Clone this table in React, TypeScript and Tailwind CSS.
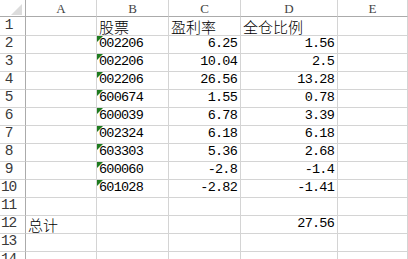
import React from 'react'

// Excel-like sheet: row header + columns A..E
const cols = ['A', 'B', 'C', 'D', 'E']

type Row = { a?: string; b?: string; c?: string; d?: string; flag?: boolean }

const rows: Row[] = [
  { b: '股票', c: '盈利率', d: '全仓比例' },
  { b: '002206', c: '6.25', d: '1.56', flag: true },
  { b: '002206', c: '10.04', d: '2.5', flag: true },
  { b: '002206', c: '26.56', d: '13.28', flag: true },
  { b: '600674', c: '1.55', d: '0.78', flag: true },
  { b: '600039', c: '6.78', d: '3.39', flag: true },
  { b: '002324', c: '6.18', d: '6.18', flag: true },
  { b: '603303', c: '5.36', d: '2.68', flag: true },
  { b: '600060', c: '-2.8', d: '-1.4', flag: true },
  { b: '601028', c: '-2.82', d: '-1.41', flag: true },
  {},
  { a: '总计', d: '27.56' },
  {},
  {},
]

const mono = "font-['Liberation_Mono',monospace] text-[13.5px] leading-[13px] tracking-[-0.77px]"
const cjk = "font-['Noto_Sans_CJK_SC',sans-serif] font-light text-[15px] leading-[15px]"

function isCjk(s: string) {
  return /[\u4e00-\u9fff]/.test(s)
}

function Cell({ text, flag, align }: { text?: string; flag?: boolean; align: 'left' | 'right' }) {
  const chinese = text ? isCjk(text) : false
  return (
    <div
      className={`relative flex items-end border-r border-b border-[#d4d4d4] ${
        align === 'right' ? 'justify-end pr-[3px]' : 'justify-start pl-[2px]'
      } ${chinese ? 'pb-[1px]' : 'pb-[3px]'}`}
    >
      {flag && (
        <span className="absolute left-0 top-0 w-0 h-0 border-t-[6px] border-r-[6px] border-t-[#1e7b1e] border-r-transparent" />
      )}
      {text && <span className={`text-black whitespace-nowrap ${chinese ? cjk : mono}`}>{text}</span>}
    </div>
  )
}

export default function App() {
  return (
    <div className="w-[408px] h-[259px] overflow-hidden bg-white">
      <div className="grid grid-cols-[26px_71px_72px_72px_97px_1fr] grid-rows-[17px_19px_repeat(13,18px)]">
        {/* corner */}
        <div className="flex items-end justify-end pr-[3px] pb-[1px] border-r border-b border-r-[#ababab] border-b-[#ababab]">
          <svg width="11" height="11" viewBox="0 0 11 11">
            <polygon points="11,0 11,11 0,11" fill="#dcdcdc" />
          </svg>
        </div>
        {cols.map(c => (
          <div
            key={c}
            className="flex items-end justify-center pb-[1px] border-r border-b border-r-[#d4d4d4] border-b-[#ababab] text-[#444] font-['Liberation_Serif',serif] text-[13px] leading-[13px]"
          >
            {c}
          </div>
        ))}
        {rows.map((r, i) => (
          <React.Fragment key={i}>
            <div className="flex items-end border-r border-b border-r-[#ababab] border-b-[#d4d4d4] pb-[3px]">
              <span className="w-[17px] text-center text-[#3a3a3a] font-['Liberation_Mono',monospace] text-[14.5px] leading-[13px] tracking-[-1.2px]">
                {i + 1}
              </span>
            </div>
            <Cell text={r.a} align="left" />
            <Cell text={r.b} flag={r.flag} align="left" />
            <Cell text={r.c} align={i === 0 ? 'left' : 'right'} />
            <Cell text={r.d} align={i === 0 ? 'left' : 'right'} />
            <Cell align="left" />
          </React.Fragment>
        ))}
      </div>
    </div>
  )
}
